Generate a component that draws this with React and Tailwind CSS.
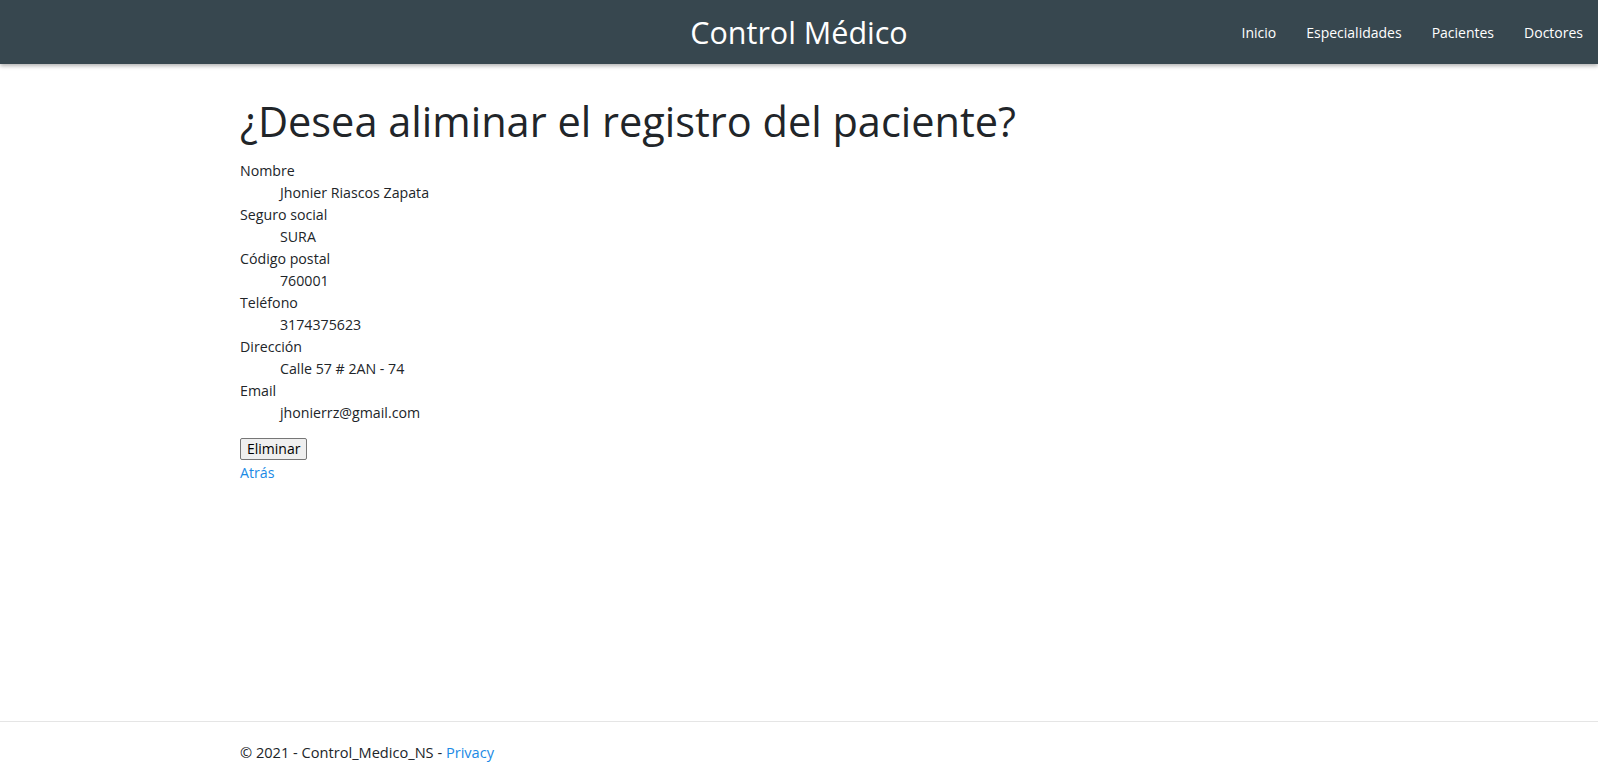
export default function App() {
  const rows = [
    ["Nombre", "Jhonier Riascos Zapata"],
    ["Seguro social", "SURA"],
    ["Código postal", "760001"],
    ["Teléfono", "3174375623"],
    ["Dirección", "Calle 57 # 2AN - 74"],
    ["Email", "jhonierrz@gmail.com"],
  ];
  return (
    <div className="min-h-screen flex flex-col bg-white text-[#212529]" style={{ fontFamily: '"Open Sans", "Noto Sans", sans-serif' }}>
      <header className="h-16 bg-[#37474f] shadow-[0_2px_4px_rgba(0,0,0,0.3)] grid grid-cols-[1fr_auto_1fr] items-center relative z-10">
        <div />
        <div className="text-white text-[30.5px] leading-none">Control Médico</div>
        <nav className="flex justify-end text-white text-[14px]">
          <a className="px-[15px]">Inicio</a>
          <a className="px-[15px]">Especialidades</a>
          <a className="px-[15px]">Pacientes</a>
          <a className="px-[15px]">Doctores</a>
        </nav>
      </header>
      <main className="flex-1 pl-[240px] pt-[33px]">
        <h1 className="text-[41.5px] leading-[1.2] mb-[13px] text-[#212529]">¿Desea aliminar el registro del paciente?</h1>
        <dl className="text-[14.2px] leading-[22px]">
          {rows.map(([k, v]) => (
            <div key={k}>
              <dt>{k}</dt>
              <dd className="ml-10">{v}</dd>
            </div>
          ))}
        </dl>
        <div className="mt-[14px] flex flex-col items-start text-[14.2px] leading-[22px]">
          <button className="h-[22px] px-[6px] border border-[#767676] rounded-[2px] bg-[#efefef] text-black text-[14px] leading-none">Eliminar</button>
          <a className="text-[#1b8ae5] mt-[2px]">Atrás</a>
        </div>
      </main>
      <footer className="border-t border-[#e5e5e5] h-[61px] leading-[60px] pl-[240px] text-[14.6px] text-[#212529]">
        © 2021 - Control_Medico_NS - <a className="text-[#1b8ae5]">Privacy</a>
      </footer>
    </div>
  );
}
